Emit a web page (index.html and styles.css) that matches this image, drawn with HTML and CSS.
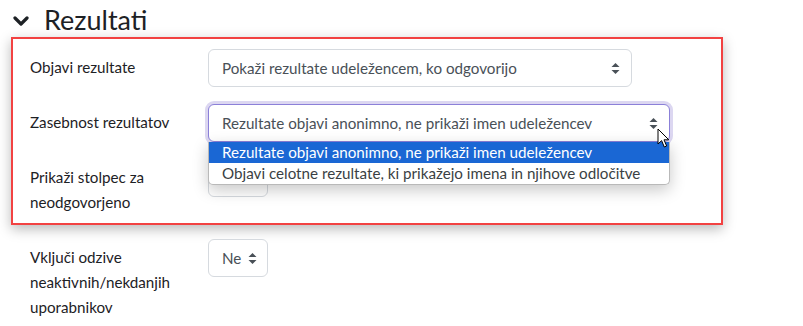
FILE: index.html
```html
<!DOCTYPE html>
<html lang="sl">
<head>
<meta charset="utf-8">
<link rel="stylesheet" href="styles.css">
</head>
<body>
<div class="page">
  <h3 class="section">
    <svg class="chev" width="16" height="12" viewBox="0 0 16 12"><polyline points="2,3 8,9 14,3" fill="none" stroke="#1d2125" stroke-width="3.2" stroke-linecap="round" stroke-linejoin="round"/></svg>
    <span>Rezultati</span>
  </h3>
  <div class="highlight">
    <div class="row">
      <div class="label">Objavi rezultate</div>
      <div class="select w1"><span>Pokaži rezultate udeležencem, ko odgovorijo</span><svg class="caret" width="9" height="13" viewBox="0 0 9 13"><path d="M4.5 1 L8.5 5 H0.5 Z M4.5 12 L8.5 8 H0.5 Z" fill="#495057"/></svg></div>
    </div>
    <div class="row">
      <div class="label">Zasebnost rezultatov</div>
      <div class="field">
        <div class="select w2 focus"><span>Rezultate objavi anonimno, ne prikaži imen udeležencev</span><svg class="caret" width="9" height="13" viewBox="0 0 9 13"><path d="M4.5 1 L8.5 5 H0.5 Z M4.5 12 L8.5 8 H0.5 Z" fill="#495057"/></svg></div>
        <ul class="dropdown">
          <li class="sel">Rezultate objavi anonimno, ne prikaži imen udeležencev</li>
          <li>Objavi celotne rezultate, ki prikažejo imena in njihove odločitve</li>
        </ul>
        <svg class="cursor" width="14" height="21" viewBox="0 0 14 21"><path d="M1 1 L1 16 L4.6 12.6 L7.3 19 L9.6 18 L7 11.8 L11.8 11.8 Z" fill="#fff" stroke="#000" stroke-width="1" stroke-linejoin="round"/></svg>
      </div>
    </div>
    <div class="row">
      <div class="label">Prikaži stolpec za neodgovorjeno</div>
      <div class="select small"></div>
    </div>
  </div>
  <div class="row outer">
    <div class="label">Vključi odzive neaktivnih/nekdanjih uporabnikov</div>
    <div class="select small"><span>Ne</span><svg class="caret" width="9" height="13" viewBox="0 0 9 13"><path d="M4.5 1 L8.5 5 H0.5 Z M4.5 12 L8.5 8 H0.5 Z" fill="#495057"/></svg></div>
  </div>
</div>
</body>
</html>
```
FILE: styles.css
```css
* { box-sizing: border-box; }
html, body { margin: 0; padding: 0; background: #fff; }
body {
  font-family: "Lato", "Noto Sans", sans-serif;
  font-size: 15.2px;
  color: #1d2125;
  overflow: hidden;
}
.page { width: 803px; height: 326px; }
.section {
  display: flex;
  align-items: center;
  margin: 0;
  height: 37px;
  padding-left: 13px;
  padding-top: 2px;
  font-size: 27px;
  font-weight: 400;
  gap: 15px;
  line-height: 1;
}
.chev { flex: none; margin-top: 2px; }
.highlight {
  margin-left: 11px;
  width: 712px;
  border: 2px solid #f24242;
  box-shadow: 0 4px 12px rgba(0,0,0,0.28);
  padding: 10px 0 8px 17px;
}
.row {
  display: flex;
  align-items: flex-start;
  margin-bottom: 17px;
}
.highlight .row:last-child { margin-bottom: 0; }
.row.outer { padding-left: 30px; margin-top: 14px; }
.label {
  width: 160px;
  margin-right: 18px;
  line-height: 25px;
  padding-top: 6px;
}
.field { position: relative; }
.select {
  height: 38px;
  border: 1px solid #d6dadf;
  border-radius: 6px;
  display: flex;
  align-items: center;
  justify-content: space-between;
  padding: 0 11px 0 13px;
  color: #495057;
  background: #fff;
}
.caret { flex: none; }
.w1 { width: 424px; }
.w2 { width: 462px; }
.small { width: 60px; padding-right: 10px; }
.focus {
  border-color: #8b80d8;
  box-shadow: 0 0 0 3px #dcd7f1;
}
.dropdown {
  position: absolute;
  left: 0;
  top: 38px;
  width: 462px;
  margin: 0;
  padding: 0;
  list-style: none;
  background: #fff;
  border: 1px solid #b9b9b9;
  border-top: none;
  border-radius: 0 0 5px 5px;
  box-shadow: 0 5px 16px rgba(0,0,0,0.22);
  overflow: hidden;
}
.dropdown li {
  height: 21px;
  line-height: 21px;
  padding-left: 13px;
  color: #3a3f44;
  white-space: nowrap;
}
.dropdown li.sel { background: #1a67d4; color: #fff; }
.cursor {
  position: absolute;
  left: 449px;
  top: 24px;
}
```
